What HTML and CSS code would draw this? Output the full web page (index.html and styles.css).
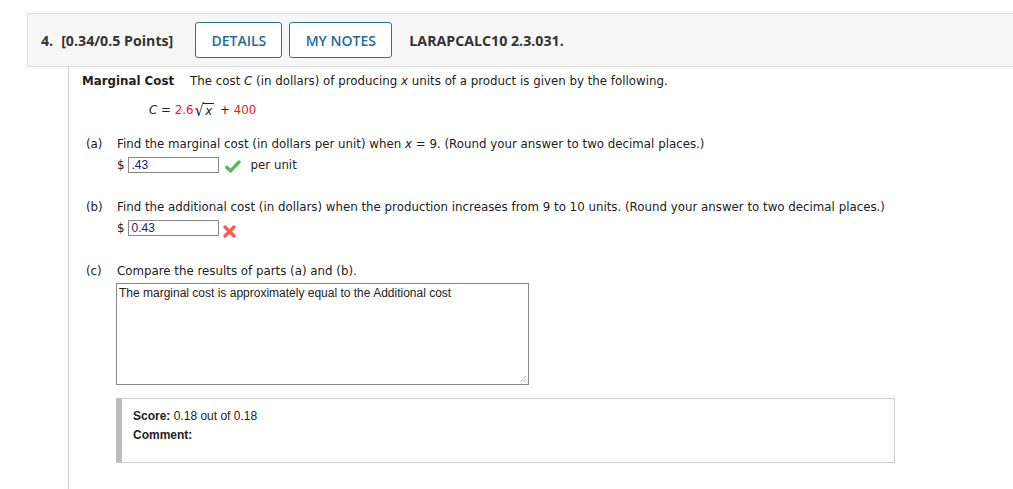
FILE: index.html
```html
<!DOCTYPE html>
<html>
<head>
<meta charset="utf-8">
<link rel="stylesheet" href="styles.css">
</head>
<body>
<div class="question">
  <div class="qhead">
    <span class="qnum">4.</span>
    <span class="points">[0.34/0.5 Points]</span>
    <span class="btn btn-details">DETAILS</span>
    <span class="btn btn-notes">MY NOTES</span>
    <span class="code">LARAPCALC10 2.3.031.</span>
  </div>
  <div class="qbody">
    <p class="intro"><b class="title">Marginal Cost</b>The cost <i>C</i> (in dollars) of producing <i>x</i> units of a product is given by the following.</p>
    <p class="formula"><i>C</i> = <span class="red">2.6</span><span class="sqrt"><span class="rad">√</span><span class="radicand"><i>x</i></span></span> + <span class="red">400</span></p>

    <div class="part part-a">
      <div class="qline"><span class="lbl">(a)</span>Find the marginal cost (in dollars per unit) when <i>x</i> = 9. (Round your answer to two decimal places.)</div>
      <div class="ansline">
        <span class="dollar">$</span><span class="field">.43</span>
        <svg class="icon check" width="16" height="13" viewBox="0 0 16 13"><path d="M1.8 7.4 L5.6 10.9 L14 2" fill="none" stroke="#5cb85c" stroke-width="3.4" stroke-linecap="round" stroke-linejoin="round"/></svg>
        <span class="unit">per unit</span>
      </div>
    </div>

    <div class="part part-b">
      <div class="qline"><span class="lbl">(b)</span>Find the additional cost (in dollars) when the production increases from 9 to 10 units. (Round your answer to two decimal places.)</div>
      <div class="ansline">
        <span class="dollar">$</span><span class="field">0.43</span>
        <svg class="icon cross" width="13" height="13" viewBox="0 0 13 13"><path d="M2 2 L11 11 M11 2 L2 11" fill="none" stroke="#f25c5c" stroke-width="3.2" stroke-linecap="round"/></svg>
      </div>
    </div>

    <div class="part part-c">
      <div class="qline"><span class="lbl">(c)</span>Compare the results of parts (a) and (b).</div>
      <div class="tarea">The marginal cost is approximately equal to the Additional cost
        <svg class="grip" width="9" height="9" viewBox="0 0 9 9"><path d="M8 2 L2 8 M8 5 L5 8" stroke="#888" stroke-width="1" stroke-dasharray="1 1"/></svg>
      </div>
    </div>

    <div class="score">
      <div class="srow"><b>Score:</b> 0.18 out of 0.18</div>
      <div class="srow"><b>Comment:</b></div>
    </div>
  </div>
</div>
</body>
</html>
```
FILE: styles.css
```css
html, body {
  margin: 0;
  padding: 0;
  background: #fff;
}
body {
  height: 489px;
  overflow: hidden;
  font-family: "DejaVu Sans", Verdana, sans-serif;
  font-size: 11.82px;
  color: #222;
}
.question {
  margin: 13px 0 0 27px;
}
.qhead {
  display: flex;
  align-items: center;
  height: 52px;
  background: #f6f6f6;
  border: 1px solid #dedede;
  border-right: none;
  padding-left: 13px;
  font-family: "Open Sans", "Noto Sans", sans-serif;
  font-weight: 700;
  font-size: 14.2px;
  color: #333;
}
.qnum {
  margin-right: 8px;
}
.points {
  margin-right: 22px;
}
.btn {
  display: flex;
  align-items: center;
  justify-content: center;
  box-sizing: border-box;
  height: 36px;
  border: 1px solid #2a6ea6;
  border-radius: 3px;
  background: #fff;
  color: #1f6aa5;
  font-weight: 600;
  font-size: 14px;
}
.btn-details {
  width: 87px;
  margin-right: 7px;
}
.btn-notes {
  width: 103px;
  margin-right: 17px;
}
.code {
  font-weight: 700;
}
.qbody {
  margin-left: 41px;
  border-left: 1px solid #cfcfcf;
  padding-left: 13px;
  height: 430px;
  padding-top: 6px;
  box-sizing: border-box;
}
p {
  margin: 0;
}
.intro {
  line-height: 16px;
}
.title {
  font-weight: 700;
  margin-right: 16px;
}
.formula {
  margin-top: 13px;
  padding-left: 67px;
  line-height: 16px;
}
.red {
  color: #e8161b;
}
.sqrt {
  display: inline-flex;
  align-items: flex-end;
  margin: 0 2px 0 1px;
  vertical-align: -2px;
}
.rad {
  font-size: 17px;
  line-height: 17px;
  transform: scaleX(0.85);
  margin-right: -2px;
}
.radicand {
  border-top: 1px solid #222;
  padding: 0 2px;
  line-height: 14px;
  margin-bottom: 1px;
}
.part {
  margin-top: 17px;
}
.part-b {
  margin-top: 26px;
}
.part-c {
  margin-top: 27px;
}
.qline {
  line-height: 16px;
  padding-left: 4px;
}
.lbl {
  display: inline-block;
  width: 31px;
}
.ansline {
  display: flex;
  align-items: center;
  margin-top: 5px;
  padding-left: 35px;
  height: 16px;
}
.dollar {
  margin-right: 3px;
}
.field {
  box-sizing: border-box;
  width: 91px;
  height: 16px;
  border: 1px solid #888;
  padding-left: 3px;
  font-family: "Liberation Sans", Arial, sans-serif;
  font-size: 12px;
  line-height: 14px;
  color: #1a1a6e;
}
.icon {
  margin-left: 6px;
}
.check {
  margin-top: 2px;
}
.cross {
  margin-left: 4px;
  margin-top: 6px;
}
.unit {
  margin-left: 10px;
}
.tarea {
  position: relative;
  box-sizing: border-box;
  width: 413px;
  height: 102px;
  margin-top: 4px;
  margin-left: 34px;
  border: 1px solid #888;
  padding: 2px 2px;
  font-family: "Liberation Sans", Arial, sans-serif;
  font-size: 12px;
  line-height: 14px;
  color: #222;
}
.grip {
  position: absolute;
  right: 1px;
  bottom: 1px;
}
.score {
  box-sizing: border-box;
  width: 779px;
  height: 65px;
  margin-top: 13px;
  margin-left: 34px;
  border: 1px solid #cccccc;
  border-left: 6px solid #bdbdbd;
  padding: 8px 0 0 11px;
  font-family: "Liberation Sans Narrow", "Liberation Sans", Arial, sans-serif;
  font-size: 12px;
  color: #222;
}
.srow {
  line-height: 19px;
}
.srow b {
  font-weight: 700;
}
```
